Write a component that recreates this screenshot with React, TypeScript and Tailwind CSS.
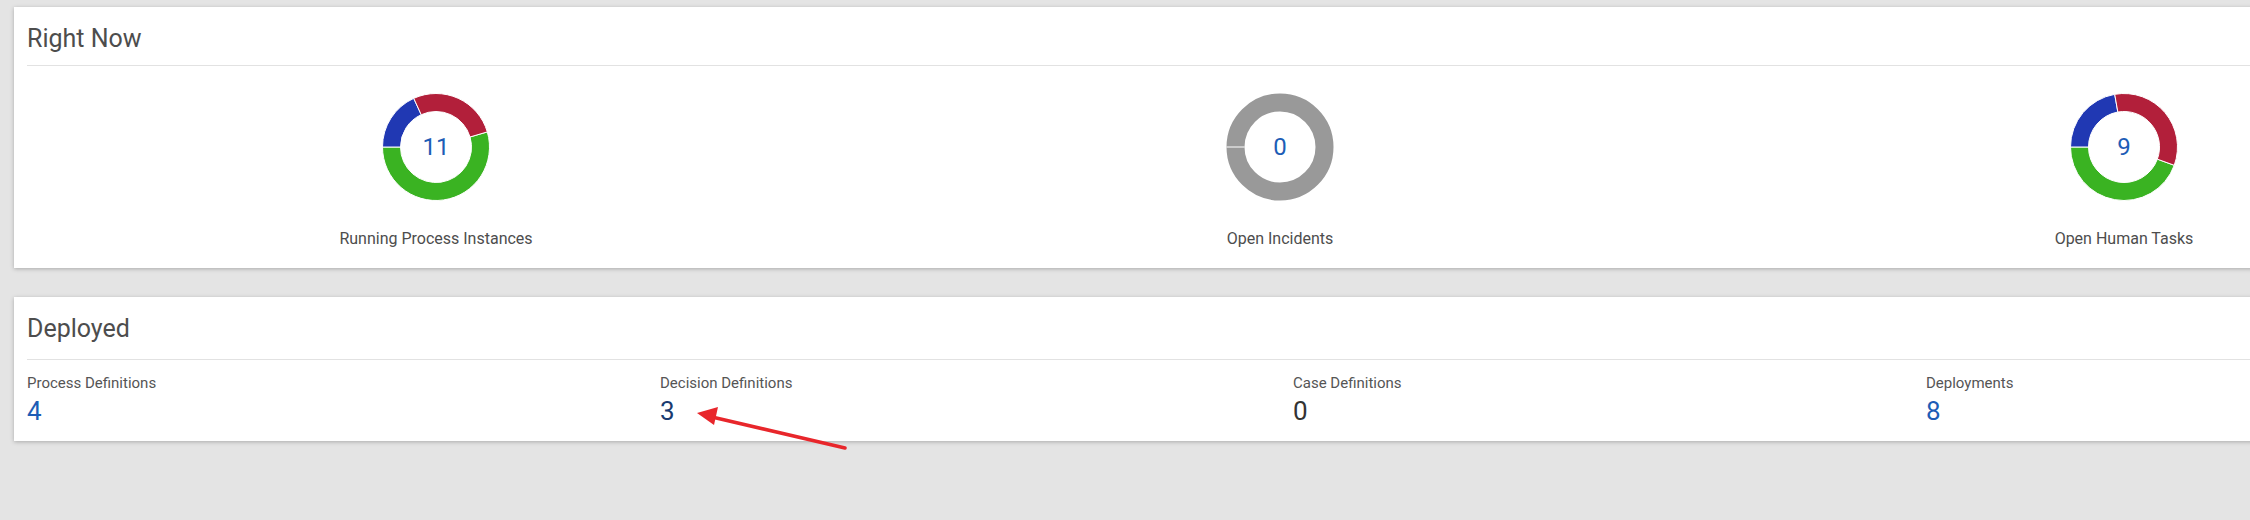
import React from "react";

type Segment = { value: number; color: string };

type DonutProps = {
  total: number;
  start: number;
  segments: Segment[];
  label: string;
};

const FONT = { fontFamily: "Roboto, 'Noto Sans', sans-serif" };

function point(c: number, rad: number, deg: number) {
  const a = (deg * Math.PI) / 180;
  return [c + rad * Math.sin(a), c - rad * Math.cos(a)];
}

function arcPath(c: number, R: number, r: number, a0: number, a1: number) {
  const large = a1 - a0 > 180 ? 1 : 0;
  const [x0, y0] = point(c, R, a0);
  const [x1, y1] = point(c, R, a1);
  const [x2, y2] = point(c, r, a1);
  const [x3, y3] = point(c, r, a0);
  return `M${x0} ${y0} A${R} ${R} 0 ${large} 1 ${x1} ${y1} L${x2} ${y2} A${r} ${r} 0 ${large} 0 ${x3} ${y3} Z`;
}

function Donut({ total, start, segments, label }: DonutProps) {
  const size = 108;
  const c = size / 2;
  const R = 53.5;
  const r = 35.5;
  const sum = segments.reduce((s, x) => s + x.value, 0);

  let angle = start;
  const arcs = segments.map((seg, i) => {
    const span = (seg.value / sum) * 360;
    const d = arcPath(c, R, r, angle, angle + span);
    angle += span;
    return <path key={i} d={d} fill={seg.color} stroke="#ffffff" strokeWidth={1} />;
  });

  return (
    <div className="flex flex-col items-center">
      <div className="relative w-[108px] h-[108px]">
        <svg width={size} height={size} viewBox={`0 0 ${size} ${size}`}>
          {sum === 0 ? (
            <>
              <circle cx={c} cy={c} r={(R + r) / 2} fill="none" stroke="#999999" strokeWidth={R - r} />
              <line x1={c - R} y1={c} x2={c - r} y2={c} stroke="#ffffff" strokeWidth={1} />
            </>
          ) : (
            arcs
          )}
        </svg>
        <div className="absolute inset-0 flex items-center justify-center text-[24px] leading-none text-[#1d5db6]">
          {total}
        </div>
      </div>
      <div className="mt-[28px] text-[16px] leading-[20px] text-[#4d4d4d]">{label}</div>
    </div>
  );
}

const GREEN = "#3ab322";
const RED = "#b21f3a";
const BLUE = "#2038b3";

const deployed = [
  { label: "Process Definitions", value: 4, color: "text-[#1d5db6]" },
  { label: "Decision Definitions", value: 3, color: "text-[#1a3b70]" },
  { label: "Case Definitions", value: 0, color: "text-[#333333]" },
  { label: "Deployments", value: 8, color: "text-[#1d5db6]" },
];

export default function App() {
  return (
    <div className="relative w-[2250px] h-[520px] overflow-hidden bg-[#e4e4e4] pt-[7px] pl-[14px]" style={FONT}>
      {/* Right Now */}
      <div className="w-[2600px] bg-white px-[13px] pb-[19px] shadow-[0_1px_4px_rgba(0,0,0,0.25)]">
        <div className="pt-[17px] pb-[11px] border-b border-[#e2e2e2]">
          <h2 className="text-[25px] leading-[30px] text-[#4d4d4d]">Right Now</h2>
        </div>
        <div className="-ml-[13px] pt-[27px] grid grid-cols-[repeat(3,844px)]">
          <Donut
            total={11}
            start={73.6}
            label="Running Process Instances"
            segments={[
              { value: 6, color: GREEN },
              { value: 2, color: BLUE },
              { value: 3, color: RED },
            ]}
          />
          <Donut total={0} start={270} label="Open Incidents" segments={[]} />
          <Donut
            total={9}
            start={110}
            label="Open Human Tasks"
            segments={[
              { value: 4, color: GREEN },
              { value: 2, color: BLUE },
              { value: 3, color: RED },
            ]}
          />
        </div>
      </div>

      {/* Deployed */}
      <div className="mt-[29px] w-[2600px] bg-white px-[13px] pb-[15px] shadow-[0_1px_4px_rgba(0,0,0,0.25)]">
        <div className="pt-[17px] pb-[15px] border-b border-[#e2e2e2]">
          <h2 className="text-[25px] leading-[30px] text-[#4d4d4d]">Deployed</h2>
        </div>
        <div className="-ml-[13px] pt-[13px] grid grid-cols-[repeat(4,633px)]">
          {deployed.map((d) => (
            <div key={d.label} className="pl-[13px]">
              <div className="text-[15px] leading-[20px] text-[#555555]">{d.label}</div>
              <div className={`mt-[3px] text-[26px] leading-[30px] ${d.color}`}>{d.value}</div>
            </div>
          ))}
        </div>
      </div>

      {/* annotation arrow */}
      <svg className="absolute left-0 top-0 pointer-events-none" width={2250} height={520}>
        <line x1={845} y1={448} x2={712} y2={417} stroke="#e8262b" strokeWidth={3.5} strokeLinecap="round" />
        <polygon points="697,413 718,407 714,425" fill="#e8262b" />
      </svg>
    </div>
  );
}
